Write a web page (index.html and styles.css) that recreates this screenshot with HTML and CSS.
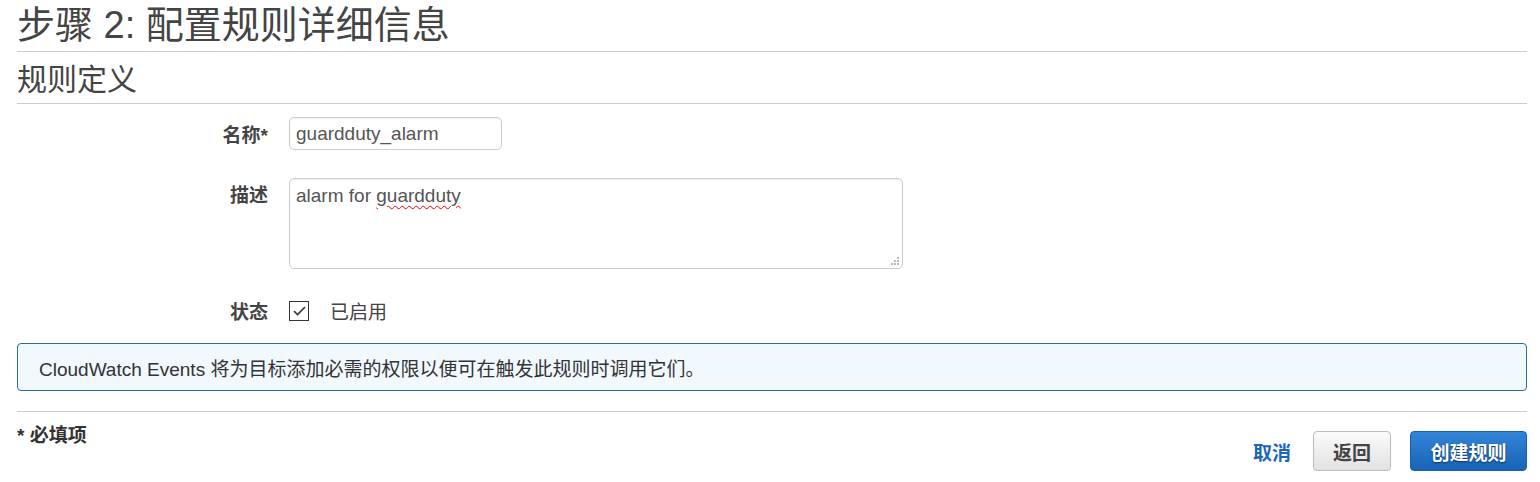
FILE: index.html
```html
<!DOCTYPE html>
<html lang="zh-CN">
<head>
<meta charset="utf-8">
<title>步骤 2: 配置规则详细信息</title>
<link rel="stylesheet" href="styles.css">
</head>
<body>
<div class="page">
  <h1 class="title">步骤 2: 配置规则详细信息</h1>
  <h2 class="subtitle">规则定义</h2>
  <div class="form">
    <div class="row row-name">
      <label class="label">名称*</label>
      <input class="input" type="text" value="guardduty_alarm">
    </div>
    <div class="row row-desc">
      <label class="label label-top">描述</label>
      <div class="textarea">
        <span>alarm for <span class="misspelled">guardduty</span></span>
        <svg class="grip" width="8" height="8" viewBox="0 0 8 8"><rect x="6" y="0" width="2" height="2" fill="#bbb"/><rect x="3" y="3" width="2" height="2" fill="#bbb"/><rect x="6" y="3" width="2" height="2" fill="#bbb"/><rect x="0" y="6" width="2" height="2" fill="#bbb"/><rect x="3" y="6" width="2" height="2" fill="#bbb"/><rect x="6" y="6" width="2" height="2" fill="#bbb"/></svg>
      </div>
    </div>
    <div class="row row-state">
      <label class="label">状态</label>
      <span class="checkbox"><svg width="13" height="10" viewBox="0 0 13 10"><path d="M1 5 L4.5 8.5 L12 1" fill="none" stroke="#333" stroke-width="1.6"/></svg></span>
      <span class="check-text">已启用</span>
    </div>
  </div>
  <div class="info">CloudWatch Events 将为目标添加必需的权限以便可在触发此规则时调用它们。</div>
  <div class="footer">
    <div class="required">* 必填项</div>
    <div class="actions">
      <a class="cancel">取消</a>
      <button class="btn btn-back">返回</button>
      <button class="btn btn-primary">创建规则</button>
    </div>
  </div>
</div>
</body>
</html>
```
FILE: styles.css
```css
* { box-sizing: border-box; }
body {
  margin: 0;
  background: #fff;
  font-family: "Liberation Sans", Arial, "Noto Sans CJK SC", sans-serif;
  color: #444;
}
.page {
  padding: 0 13px 0 17px;
}
.title {
  margin: 0;
  padding-top: 3px;
  font-size: 38px;
  font-weight: normal;
  line-height: 44px;
  height: 52px;
  border-bottom: 1px solid #ccc;
  color: #444;
}
.subtitle {
  margin: 0;
  padding-top: 3px;
  font-size: 30px;
  font-weight: normal;
  line-height: 50px;
  height: 52px;
  border-bottom: 1px solid #ccc;
  color: #444;
}
.form {
  padding-top: 13px;
}
.row {
  display: flex;
  align-items: center;
}
.label {
  width: 251px;
  text-align: right;
  font-weight: bold;
  font-size: 19px;
  margin-right: 21px;
  color: #444;
}
.row-desc {
  align-items: flex-start;
  margin-top: 28px;
}
.label-top {
  padding-top: 2px;
}
.input {
  width: 213px;
  height: 33px;
  border: 1px solid #ccc;
  border-radius: 5px;
  padding: 0 6px;
  font-family: "Liberation Sans", Arial, sans-serif;
  font-size: 19px;
  color: #555;
  box-shadow: inset 0 1px 1px rgba(0,0,0,0.06);
}
.textarea {
  position: relative;
  width: 614px;
  height: 91px;
  border: 1px solid #ccc;
  border-radius: 5px;
  padding: 5px 6px;
  font-size: 19px;
  line-height: 24px;
  color: #555;
  box-shadow: inset 0 1px 1px rgba(0,0,0,0.06);
}
.misspelled {
  text-decoration: underline wavy #e00;
  text-decoration-thickness: 1px;
  text-underline-offset: 3px;
}
.grip {
  position: absolute;
  right: 3px;
  bottom: 3px;
}
.row-state {
  margin-top: 28px;
}
.checkbox {
  width: 20px;
  height: 20px;
  border: 1.5px solid #333;
  display: flex;
  align-items: center;
  justify-content: center;
  margin-right: 21px;
}
.check-text {
  font-size: 19px;
  color: #444;
}
.info {
  margin-top: 19px;
  height: 48px;
  border: 1px solid #2a6aae;
  border-radius: 4px;
  background: #f1f8fe;
  padding: 0 21px;
  display: flex;
  align-items: center;
  font-size: 19px;
  color: #333;
}
.footer {
  margin-top: 20px;
  border-top: 1px solid #ccc;
  display: flex;
  justify-content: space-between;
  align-items: flex-start;
}
.required {
  margin-top: 8px;
  font-weight: bold;
  font-size: 19px;
  color: #333;
}
.actions {
  margin-top: 19px;
  display: flex;
  align-items: center;
}
.cancel {
  color: #1b66b9;
  font-weight: bold;
  font-size: 19px;
  margin-right: 22px;
}
.btn {
  height: 40px;
  border-radius: 4px;
  font-family: "Liberation Sans", Arial, "Noto Sans CJK SC", sans-serif;
  font-size: 19px;
  font-weight: bold;
  cursor: pointer;
}
.btn-back {
  width: 78px;
  border: 1px solid #bbb;
  background: linear-gradient(#fafafa, #e2e2e2);
  color: #444;
  margin-right: 19px;
}
.btn-primary {
  width: 117px;
  border: 1px solid #1a5ea8;
  background: linear-gradient(#3384d8, #1864b7);
  color: #fff;
  text-shadow: 0 1px 2px rgba(0,0,0,0.55);
}
```
